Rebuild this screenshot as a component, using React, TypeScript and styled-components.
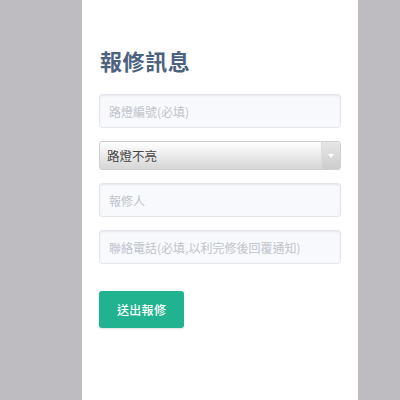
import React from 'react';
import styled, { createGlobalStyle } from 'styled-components';

const GlobalStyle = createGlobalStyle`
  html, body {
    margin: 0;
    padding: 0;
    background: #bebcc1;
  }
  body {
    font-family: "Noto Sans CJK TC", "Noto Sans", "Liberation Sans", sans-serif;
  }
`;

const Page = styled.div`
  display: flex;
  min-height: 400px;
`;

const Panel = styled.main`
  margin-left: 82px;
  width: 276px;
  min-height: 400px;
  background: #ffffff;
  padding: 47px 17px 0;
  box-sizing: border-box;
`;

const Title = styled.h2`
  margin: 0 0 21px;
  font-size: 22px;
  line-height: 26px;
  font-weight: 700;
  color: #4c6380;
  letter-spacing: 0.6px;
  padding-left: 1px;
`;

const Form = styled.form`
  display: flex;
  flex-direction: column;
  gap: 13px;
`;

const TextInput = styled.input`
  box-sizing: border-box;
  width: 100%;
  height: 34px;
  padding: 0 9px;
  border: 1px solid #e4e6ec;
  border-radius: 3px;
  background: #f8f9fd;
  box-shadow: inset 0 1px 2px rgba(0, 0, 0, 0.08);
  font-family: inherit;
  font-size: 12px;
  color: #333;
  outline: none;

  &::placeholder {
    color: #bfc3cb;
  }
`;

const SelectBox = styled.div`
  display: flex;
  height: 29px;
  box-sizing: border-box;
  border: 1px solid #cfcfcf;
  border-radius: 3px;
  background: linear-gradient(#ffffff, #d6d6d6);
  overflow: hidden;
`;

const Select = styled.select`
  flex: 1;
  appearance: none;
  -webkit-appearance: none;
  border: none;
  background: transparent;
  padding: 0 0 0 7px;
  font-family: inherit;
  font-size: 12.5px;
  color: #444;
  outline: none;
`;

const Arrow = styled.span`
  width: 18px;
  display: flex;
  align-items: center;
  justify-content: center;
  background: linear-gradient(#e6e6e6, #cdcdcd);
  border-left: 1px solid #dcdcdc;

  &::after {
    content: '';
    border-left: 3px solid transparent;
    border-right: 3px solid transparent;
    border-top: 4px solid #ffffff;
  }
`;

const SubmitButton = styled.button`
  align-self: flex-start;
  margin-top: 14px;
  height: 37px;
  padding: 0 18px;
  border: none;
  border-radius: 3px;
  background: #21b38f;
  color: #ffffff;
  font-family: inherit;
  font-size: 12px;
  font-weight: 500;
  letter-spacing: 0.3px;
  box-shadow: 0 1px 2px rgba(0, 0, 0, 0.12);
  cursor: pointer;
`;

export default function App() {
  return (
    <>
      <GlobalStyle />
      <Page>
        <Panel>
          <Title>報修訊息</Title>
          <Form onSubmit={(e) => e.preventDefault()}>
            <TextInput placeholder="路燈編號(必填)" />
            <SelectBox>
              <Select defaultValue="路燈不亮">
                <option>路燈不亮</option>
                <option>路燈閃爍</option>
                <option>其他</option>
              </Select>
              <Arrow />
            </SelectBox>
            <TextInput placeholder="報修人" />
            <TextInput placeholder="聯絡電話(必填,以利完修後回覆通知)" />
            <SubmitButton type="submit">送出報修</SubmitButton>
          </Form>
        </Panel>
      </Page>
    </>
  );
}
